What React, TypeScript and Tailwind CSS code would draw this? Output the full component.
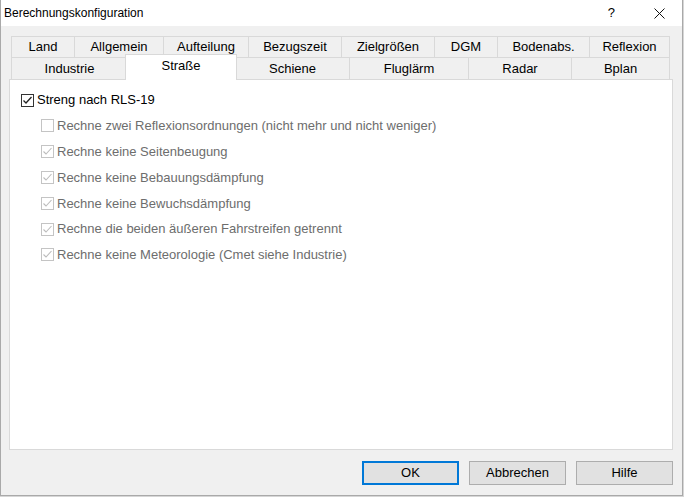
import React from 'react';

const row1 = [
  { label: 'Land', w: 63 },
  { label: 'Allgemein', w: 89 },
  { label: 'Aufteilung', w: 85 },
  { label: 'Bezugszeit', w: 93 },
  { label: 'Zielgrößen', w: 93 },
  { label: 'DGM', w: 63 },
  { label: 'Bodenabs.', w: 92 },
  { label: 'Reflexion', w: 81 },
];

const row2 = [
  { label: 'Industrie', w: 116 },
  { label: 'Straße', w: 108 },
  { label: 'Schiene', w: 114 },
  { label: 'Fluglärm', w: 119 },
  { label: 'Radar', w: 103 },
  { label: 'Bplan', w: 99 },
];

const options = [
  { label: 'Rechne zwei Reflexionsordnungen (nicht mehr und nicht weniger)', checked: false },
  { label: 'Rechne keine Seitenbeugung', checked: true },
  { label: 'Rechne keine Bebauungsdämpfung', checked: true },
  { label: 'Rechne keine Bewuchsdämpfung', checked: true },
  { label: 'Rechne die beiden äußeren Fahrstreifen getrennt', checked: true },
  { label: 'Rechne keine Meteorologie (Cmet siehe Industrie)', checked: true },
];

const CheckBox = ({ checked, disabled }: { checked: boolean; disabled?: boolean }) => (
  <div
    className={
      'w-[13px] h-[13px] shrink-0 bg-white border ' +
      (disabled ? 'border-[#c4c4c4]' : 'border-[#333333]')
    }
  >
    {checked && (
      <svg width="11" height="11" viewBox="0 0 11 11" className="block">
        <path
          d="M1.5 5.5 L4 8 L9.5 2"
          fill="none"
          stroke={disabled ? '#bcbcbc' : '#222222'}
          strokeWidth={disabled ? 1.1 : 1.3}
        />
      </svg>
    )}
  </div>
);

const Button = ({ label, primary }: { label: string; primary?: boolean }) => (
  <button
    className={
      'w-[97px] h-[24px] bg-[#e1e1e1] text-[13px] text-black flex items-center justify-center ' +
      (primary ? 'border-2 border-[#0078d7]' : 'border border-[#adadad]')
    }
  >
    {label}
  </button>
);

export default function App() {
  return (
    <div
      className="w-[684px] h-[497px] bg-[#d6d6d6] overflow-hidden"
      style={{ fontFamily: '"Liberation Sans", Arial, sans-serif' }}
    >
      <div className="w-[683px] h-[496px] bg-[#f0f0f0] border-l border-r border-b border-[#a9a9a9] flex flex-col">
        {/* title bar */}
        <div className="h-[26px] bg-white flex items-center pl-[3px] shrink-0">
          <span className="text-[12px] text-black">Berechnungskonfiguration</span>
          <span className="ml-auto text-[13px] text-black mr-[39px]">?</span>
          <svg width="11" height="11" viewBox="0 0 11 11" className="mr-[17px]">
            <path d="M0.5 0.5 L10.5 10.5 M10.5 0.5 L0.5 10.5" stroke="#111" strokeWidth="1" />
          </svg>
        </div>

        {/* tab strip */}
        <div className="ml-[10px] mt-[10px] w-[659px] text-[13px] text-black">
          <div className="flex h-[21px]">
            {row1.map((t, i) => (
              <div
                key={t.label}
                style={{ width: t.w }}
                className={
                  'border-t border-l border-[#d9d9d9] flex items-center justify-center ' +
                  (i === row1.length - 1 ? 'border-r' : '')
                }
              >
                {t.label}
              </div>
            ))}
          </div>
          <div className="flex h-[22px]">
            {row2.map((t, i) =>
              t.label === 'Straße' ? (
                <div
                  key={t.label}
                  style={{ width: t.w + 4 }}
                  className="relative z-10 -mx-[2px] -mt-[3px] h-[26px] bg-white border-t border-l border-r border-[#d9d9d9] flex justify-center pt-[1px]"
                >
                  {t.label}
                </div>
              ) : (
                <div
                  key={t.label}
                  style={{ width: t.w }}
                  className={
                    'border-t border-l border-[#d9d9d9] flex items-center justify-center ' +
                    (i === row2.length - 1 ? 'border-r' : '')
                  }
                >
                  {t.label}
                </div>
              )
            )}
          </div>
        </div>

        {/* page */}
        <div className="ml-[8px] w-[664px] h-[371px] bg-white border border-[#d9d9d9] pt-[7px] text-[13px]">
          <div className="flex items-center h-[26px] pl-[11px] gap-[3px] text-black">
            <CheckBox checked />
            <span>Streng nach RLS-19</span>
          </div>
          {options.map((o) => (
            <div key={o.label} className="flex items-center h-[25.8px] pl-[31px] gap-[3px] text-[#6d6d6d]">
              <CheckBox checked={o.checked} disabled />
              <span>{o.label}</span>
            </div>
          ))}
        </div>

        {/* buttons */}
        <div className="flex justify-end gap-[10px] pr-[9px] mt-[11px]">
          <Button label="OK" primary />
          <Button label="Abbrechen" />
          <Button label="Hilfe" />
        </div>
      </div>
    </div>
  );
}
